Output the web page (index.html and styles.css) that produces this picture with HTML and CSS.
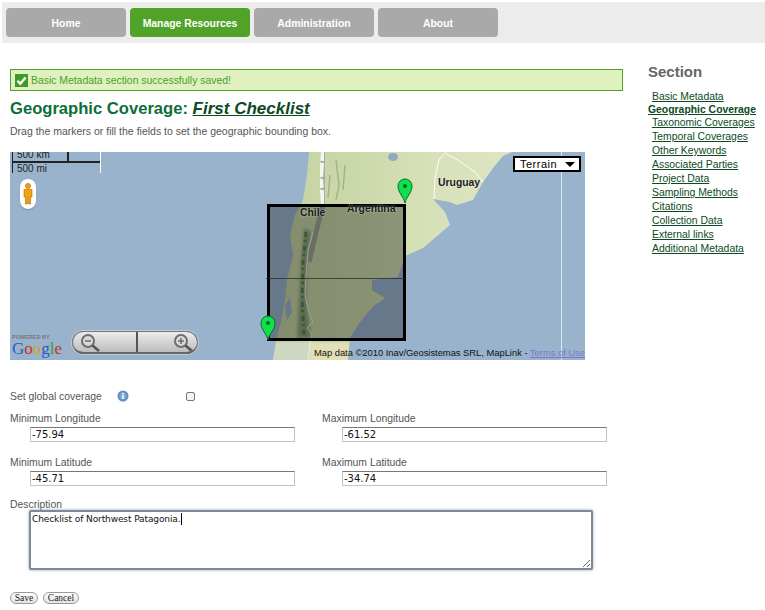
FILE: index.html
```html
<!DOCTYPE html>
<html lang="en">
<head>
    <meta charset="UTF-8">
    <title>Geographic Coverage</title>
    <link rel="stylesheet" href="styles.css">
</head>
<body>

<ul class="menu">
    <li><a href="#">Home</a></li>
    <li><a href="#" class="current">Manage Resources</a></li>
    <li><a href="#">Administration</a></li>
    <li><a href="#">About</a></li>
</ul>

<div class="page">
    <div class="content">
        <div class="message">
            <svg class="message-icon" viewBox="0 0 13 13">
                <rect width="13" height="13" fill="#3f9a2a"/>
                <path d="M2.5 6.8 L5.3 9.8 L10.6 3.4" fill="none" stroke="#fff" stroke-width="2.4"/>
            </svg>
            <span>Basic Metadata section successfully saved!</span>
        </div>

        <h1>Geographic Coverage: <a href="#">First Checklist</a></h1>
        <p class="intro">Drag the markers or fill the fields to set the geographic bounding box.</p>

        <!-- Mapa: tudo aqui dentro fica em coordenadas do proprio mapa -->
        <div class="map">
            <svg class="map-base" viewBox="10 152 575 208">
                <defs>
                    <filter id="soft"><feGaussianBlur stdDeviation="0.6"/></filter>
                    <filter id="medium"><feGaussianBlur stdDeviation="1.8"/></filter>
                    <linearGradient id="landFill" gradientUnits="userSpaceOnUse" x1="273" y1="0" x2="512" y2="0">
                        <stop offset="0" stop-color="#c4d2a4"/>
                        <stop offset="0.35" stop-color="#cbd8aa"/>
                        <stop offset="0.65" stop-color="#d7e1b8"/>
                        <stop offset="1" stop-color="#dde5c2"/>
                    </linearGradient>
                </defs>

                <rect x="10" y="152" width="575" height="208" fill="#99b3cc"/>

                <!-- continente -->
                <path d="M309 152 L307 175 L303 200 L295 215 L290 235 L293 255 L287 280 L285 300 L281 322 L276 340 L273 360 L348 360 L350 338 L358 325 L368 312 L375 305 L385 298 L380 295 L372 290 L372 280 L398 277 L405 256 L423 248 L450 225 L445 212 L433 199 L450 202 L457 205 L473 200 L483 182 L493 168 L503 156 L512 152 Z" fill="url(#landFill)" filter="url(#soft)"/>

                <!-- sul da Patagonia, mais amarelo -->
                <path d="M310 343 H349 L348 360 H310 Z" fill="#e2dfb6"/>
                <path d="M276 343 H310 V360 H273 Z" fill="#cfd8c2"/>

                <!-- faixa verde do Chile -->
                <path d="M304 228 L311 232 L307 262 L306 300 L311 338 L297 338 L299 300 L301 262 Z" fill="#87a277" filter="url(#medium)"/>
                <path d="M306 232 L303 262 L302 300 L304 336" fill="none" stroke="#5f7f52" stroke-width="3" stroke-dasharray="5 3 2 4" filter="url(#soft)"/>
                <path d="M336 160 L339 185 L336 200 M345 165 L343 190 M330 175 L328 198" fill="none" stroke="#a3b48c" stroke-width="1.5" filter="url(#soft)"/>

                <!-- Andes -->
                <path d="M324 152 L322 178 L324 205" fill="none" stroke="#a7ad9e" stroke-width="9" filter="url(#soft)"/>
                <path d="M323 152 L321 178 L323 205" fill="none" stroke="#f4f4f0" stroke-width="4" stroke-dasharray="9 2 14 2" filter="url(#soft)"/>
                <path d="M323 205 L316 232 L309 262" fill="none" stroke="#9ea596" stroke-width="5" filter="url(#soft)"/>

                <!-- fronteiras -->
                <path d="M313 232 L308 250 L306 278 L305 295 L309 312 L313 322 L307 328 L312 334 L310 342 L308 360" fill="none" stroke="#ecece0" stroke-width="1"/>
                <path d="M434 199 L435 178 L439 160 L446 152" fill="none" stroke="#fff" stroke-width="1"/>
                <path d="M446 154 L458 160 L475 172 L483 182" fill="none" stroke="#fff" stroke-width="1"/>

                <!-- lagoas e ilhas -->
                <ellipse cx="393" cy="157" rx="5" ry="4" fill="#8ea9c4" filter="url(#soft)"/>
                <path d="M285 305 L290 298 L292 312 L287 320 Z" fill="#99b3cc" filter="url(#soft)"/>

                <!-- meridiano -->
                <path d="M561.5 152 V360" stroke="#dfe6ee" stroke-width="1"/>

                <!-- caixa de selecao -->
                <rect x="268.5" y="205.5" width="136" height="134" fill="#000" fill-opacity="0.33" stroke="#000" stroke-width="3"/>
                <path d="M266 278.5 H405" stroke="#222" stroke-opacity="0.7" stroke-width="1"/>
            </svg>

            <span class="place place-chile">Chile</span>
            <span class="place place-argentina">Argentina</span>
            <span class="place place-uruguay">Uruguay</span>

            <svg class="pin pin-north" viewBox="0 0 16 26">
                <path d="M8 25 C7 19 1 15 1 8 A7 7 0 0 1 15 8 C15 15 9 19 8 25 Z" fill="#0fe14c" stroke="#0a6a2a" stroke-width="1"/>
                <circle cx="8" cy="8" r="2" fill="#063"/>
            </svg>
            <svg class="pin pin-south" viewBox="0 0 16 26">
                <path d="M8 25 C7 19 1 15 1 8 A7 7 0 0 1 15 8 C15 15 9 19 8 25 Z" fill="#0fe14c" stroke="#0a6a2a" stroke-width="1"/>
                <circle cx="8" cy="8" r="2" fill="#063"/>
            </svg>

            <div class="scale">
                <span class="scale-km">500 km</span>
                <span class="scale-mi">500 mi</span>
            </div>

            <div class="pegman">
                <svg viewBox="0 0 10 22" width="10" height="22">
                    <circle cx="5" cy="3" r="2.6" fill="#f5a00f" stroke="#b06a00" stroke-width="0.6"/>
                    <path d="M1 6.5 H9 V14 H7.6 V21 H5.6 V15 H4.4 V21 H2.4 V14 H1 Z" fill="#f5a00f" stroke="#b06a00" stroke-width="0.6"/>
                </svg>
            </div>

            <div class="map-type"><span>Terrain</span><i class="map-type-arrow"></i></div>

            <div class="google">
                <span class="google-by">POWERED BY</span>
                <span class="google-logo"><span class="g-blue">G</span><span class="g-red">o</span><span class="g-yellow">o</span><span class="g-blue">g</span><span class="g-green">l</span><span class="g-red">e</span></span>
            </div>

            <div class="zoom">
                <div class="zoom-half">
                    <svg viewBox="0 0 26 22" width="26" height="22">
                        <circle cx="11" cy="9" r="6" fill="#d8d8d8" stroke="#6e6e6e" stroke-width="2"/>
                        <path d="M8 9 H14" stroke="#6e6e6e" stroke-width="1.6"/>
                        <path d="M15.5 13.5 L22 19" stroke="#555" stroke-width="2.6"/>
                    </svg>
                </div>
                <div class="zoom-half zoom-plus">
                    <svg viewBox="0 0 26 22" width="26" height="22">
                        <circle cx="11" cy="9" r="6" fill="#d8d8d8" stroke="#6e6e6e" stroke-width="2"/>
                        <path d="M8 9 H14 M11 6 V12" stroke="#6e6e6e" stroke-width="1.6"/>
                        <path d="M15.5 13.5 L22 19" stroke="#555" stroke-width="2.6"/>
                    </svg>
                </div>
            </div>

            <div class="attribution">Map data ©2010 Inav/Geosistemas SRL, MapLink - <a href="#">Terms of Use</a></div>
        </div>

        <form class="coverage">
            <div class="global-row">
                <label for="global" class="global-label">Set global coverage</label>
                <svg class="info" viewBox="0 0 12 12">
                    <circle cx="6" cy="6" r="5.5" fill="#5c8fc6"/>
                    <circle cx="6" cy="6" r="3.6" fill="#7fa8d6"/>
                    <rect x="5.2" y="5" width="1.6" height="4" fill="#fff"/>
                    <rect x="5.2" y="2.8" width="1.6" height="1.4" fill="#fff"/>
                </svg>
                <input type="checkbox" id="global" class="check">
            </div>

            <div class="coords">
                <div class="field">
                    <label for="minlon">Minimum Longitude</label>
                    <input type="text" id="minlon" value="-75.94">
                </div>
                <div class="field">
                    <label for="maxlon">Maximum Longitude</label>
                    <input type="text" id="maxlon" value="-61.52">
                </div>
                <div class="field">
                    <label for="minlat">Minimum Latitude</label>
                    <input type="text" id="minlat" value="-45.71">
                </div>
                <div class="field">
                    <label for="maxlat">Maximum Latitude</label>
                    <input type="text" id="maxlat" value="-34.74">
                </div>
            </div>

            <div class="description">
                <label for="desc">Description</label>
                <div class="desc-box">
                    <textarea id="desc">Checklist of Northwest Patagonia.</textarea>
                    <i class="caret"></i>
                </div>
            </div>

            <div class="actions">
                <button type="button" class="btn btn-save">Save</button>
                <button type="button" class="btn btn-cancel">Cancel</button>
            </div>
        </form>
    </div>

    <div class="sidebar">
        <h2>Section</h2>
        <ul>
            <li class="tight"><a href="#">Basic Metadata</a></li>
            <li class="tight active"><a href="#">Geographic Coverage</a></li>
            <li><a href="#">Taxonomic Coverages</a></li>
            <li><a href="#">Temporal Coverages</a></li>
            <li><a href="#">Other Keywords</a></li>
            <li><a href="#">Associated Parties</a></li>
            <li><a href="#">Project Data</a></li>
            <li><a href="#">Sampling Methods</a></li>
            <li><a href="#">Citations</a></li>
            <li><a href="#">Collection Data</a></li>
            <li><a href="#">External links</a></li>
            <li><a href="#">Additional Metadata</a></li>
        </ul>
    </div>
</div>

</body>
</html>
```

FILE: styles.css
```css
/* Estilizacao geral */
* {
    margin: 0;
    padding: 0;
    box-sizing: border-box;
}

body {
    font-family: "Liberation Sans", Arial, sans-serif;
    font-size: 10.4px;
    background-color: #fff;
    color: #555;
    overflow: hidden;
}

ul {
    list-style: none;
}

/* Menu superior */
.menu {
    display: flex;
    gap: 4px;
    height: 41px;
    margin: 2px 0 0 2px;
    padding: 6px 0 0 4px;
    background-color: #ececec;
}

.menu a {
    display: block;
    width: 120px;
    height: 29px;
    line-height: 31px;
    text-align: center;
    border-radius: 4px;
    background-color: #a9a9a9;
    color: #fff;
    font-weight: bold;
    text-decoration: none;
}

.menu a.current {
    background-color: #50a328;
}

/* Colunas */
.page {
    display: flex;
}

.content {
    width: 613px;
    margin-left: 10px;
    flex-shrink: 0;
}

.sidebar {
    margin-left: 25px;
    padding-top: 21px;
}

/* Mensagem */
.message {
    display: flex;
    align-items: center;
    gap: 3px;
    height: 22px;
    margin-top: 26px;
    padding-left: 4px;
    border: 1px solid #4fa32a;
    background-color: #dff1bf;
    color: #4a9f2a;
}

.message-icon {
    width: 13px;
    height: 13px;
}

h1 {
    margin-top: 8px;
    font-size: 16.6px;
    line-height: 20px;
    color: #0d6f37;
}

h1 a {
    color: #0b4a23;
    font-size: 17px;
    font-style: italic;
}

.intro {
    margin-top: 5px;
    font-size: 10.5px;
    line-height: 14px;
    color: #555;
}

/* Mapa */
.map {
    position: relative;
    width: 575px;
    height: 208px;
    margin-top: 14px;
    overflow: hidden;
    background-color: #99b3cc;
}

.map-base {
    display: block;
    width: 575px;
    height: 208px;
}

.place {
    position: absolute;
    font-weight: bold;
    color: #1a1a1a;
    text-shadow: 0 0 2px rgba(255, 255, 255, 0.7);
}

.place-chile { left: 290px; top: 55px; }
.place-argentina { left: 337px; top: 51px; }
.place-uruguay { left: 428px; top: 25px; }

.pin {
    position: absolute;
    width: 16px;
    height: 26px;
}

.pin-north { left: 387px; top: 26px; }
.pin-south { left: 250px; top: 163px; }

.scale {
    position: absolute;
    left: 2px;
    top: 0;
    width: 89px;
    height: 21px;
    border-left: 1px solid #222;
    border-right: 1px solid #fff;
    color: #222;
    font-size: 10px;
}

.scale::before {
    content: "";
    position: absolute;
    left: 0;
    right: 0;
    top: 9px;
    border-top: 2px solid #222;
}

.scale::after {
    content: "";
    position: absolute;
    left: 54px;
    top: 0;
    height: 9px;
    border-left: 2px solid #222;
}

.scale-km {
    position: absolute;
    left: 4px;
    top: -3px;
}

.scale-mi {
    position: absolute;
    left: 4px;
    top: 11px;
}

.pegman {
    position: absolute;
    left: 10px;
    top: 27px;
    width: 16px;
    height: 30px;
    display: flex;
    align-items: center;
    justify-content: center;
    background-color: #fff;
    border-radius: 8px;
    box-shadow: 0 1px 1px rgba(0, 0, 0, 0.25);
}

.map-type {
    position: absolute;
    left: 503px;
    top: 4px;
    width: 68px;
    height: 16px;
    display: flex;
    align-items: center;
    justify-content: space-between;
    padding: 0 4px 0 5px;
    background-color: #fff;
    border: 2px solid #000;
    color: #000;
    font-size: 11px;
    letter-spacing: 0.5px;
}

.map-type-arrow {
    width: 0;
    height: 0;
    border-left: 5px solid transparent;
    border-right: 5px solid transparent;
    border-top: 5px solid #000;
}

.google {
    position: absolute;
    left: 2px;
    top: 182px;
    width: 52px;
}

.google-by {
    display: block;
    font-size: 5.5px;
    line-height: 6px;
    font-weight: bold;
    color: #777;
    white-space: nowrap;
}

.google-logo {
    display: block;
    font-family: "Liberation Serif", serif;
    font-size: 17px;
    line-height: 17px;
}

.g-blue { color: #2a5bc4; }
.g-red { color: #c8321e; }
.g-yellow { color: #d9a514; }
.g-green { color: #3f9a3a; }

.zoom {
    position: absolute;
    left: 62px;
    top: 179px;
    width: 126px;
    height: 23px;
    display: flex;
    overflow: hidden;
    border: 1px solid #777;
    border-bottom: 2px solid #666;
    border-radius: 12px;
    background: linear-gradient(#ececec, #bdbdbd);
    box-shadow: 0 0 0 1px rgba(255, 255, 255, 0.35);
}

.zoom-half {
    flex: 1;
    padding: 0 0 0 4px;
}

.zoom-plus {
    display: flex;
    justify-content: flex-end;
    padding: 0 1px 0 0;
    border-left: 2px solid #555;
}

.attribution {
    position: absolute;
    right: 0;
    bottom: 1px;
    color: #111;
    font-size: 9.35px;
    line-height: 12px;
    white-space: nowrap;
}

.attribution a {
    color: #7777cc;
}

/* Formulario */
.coverage {
    color: #555;
}

.global-row {
    display: flex;
    align-items: center;
    height: 14px;
    margin-top: 29px;
}

.global-label {
    width: 107px;
}

.info {
    width: 12px;
    height: 12px;
}

.check {
    width: 9px;
    height: 9px;
    margin-left: 57px;
    appearance: none;
    border: 1px solid #777;
    border-radius: 2px;
    background-color: #f4f4f4;
}

.coords {
    display: grid;
    grid-template-columns: 312px 301px;
    row-gap: 14px;
    margin-top: 9px;
}

.field label {
    display: block;
    height: 15px;
    line-height: 14px;
}

.description label {
    display: block;
    height: 12px;
    line-height: 14px;
}

.field input {
    display: block;
    width: 265px;
    height: 15px;
    margin-left: 20px;
    padding: 0 1px;
    border: 1px solid #c4c4c4;
    border-top: 1px solid #777;
    font-family: "DejaVu Sans", sans-serif;
    font-size: 10px;
    color: #111;
}

.description {
    margin-top: 12px;
}

.desc-box {
    position: relative;
    width: 564px;
    height: 60px;
    margin-left: 19px;
}

.desc-box textarea {
    display: block;
    width: 564px;
    height: 60px;
    padding: 2px 1px;
    border: 2px solid #7f8a96;
    border-radius: 2px;
    box-shadow: 0 0 3px #8ea2b8;
    outline: none;
    font-family: "DejaVu Sans", sans-serif;
    font-size: 9px;
    letter-spacing: -0.1px;
    color: #111;
}

.caret {
    position: absolute;
    left: 152px;
    top: 3px;
    width: 1px;
    height: 12px;
    background-color: #000;
}

.actions {
    display: flex;
    gap: 5px;
    margin-top: 22px;
}

.btn {
    height: 12px;
    border: 1px solid #999;
    border-radius: 6px;
    background: linear-gradient(#fff, #e2e2e2);
    font-family: "Liberation Serif", serif;
    font-size: 9.5px;
    line-height: 10px;
    color: #222;
}

.btn-save {
    width: 28px;
}

.btn-cancel {
    width: 36px;
}

/* Lateral */
.sidebar h2 {
    font-size: 15px;
    line-height: 16px;
    color: #666;
}

.sidebar ul {
    margin-top: 10px;
}

.sidebar li {
    height: 14px;
    line-height: 14px;
    padding-left: 4px;
    white-space: nowrap;
}

.sidebar li.tight {
    height: 13px;
}

.sidebar li.active {
    padding-left: 0;
    font-weight: bold;
}

.sidebar a {
    color: #0b4a23;
}
```
